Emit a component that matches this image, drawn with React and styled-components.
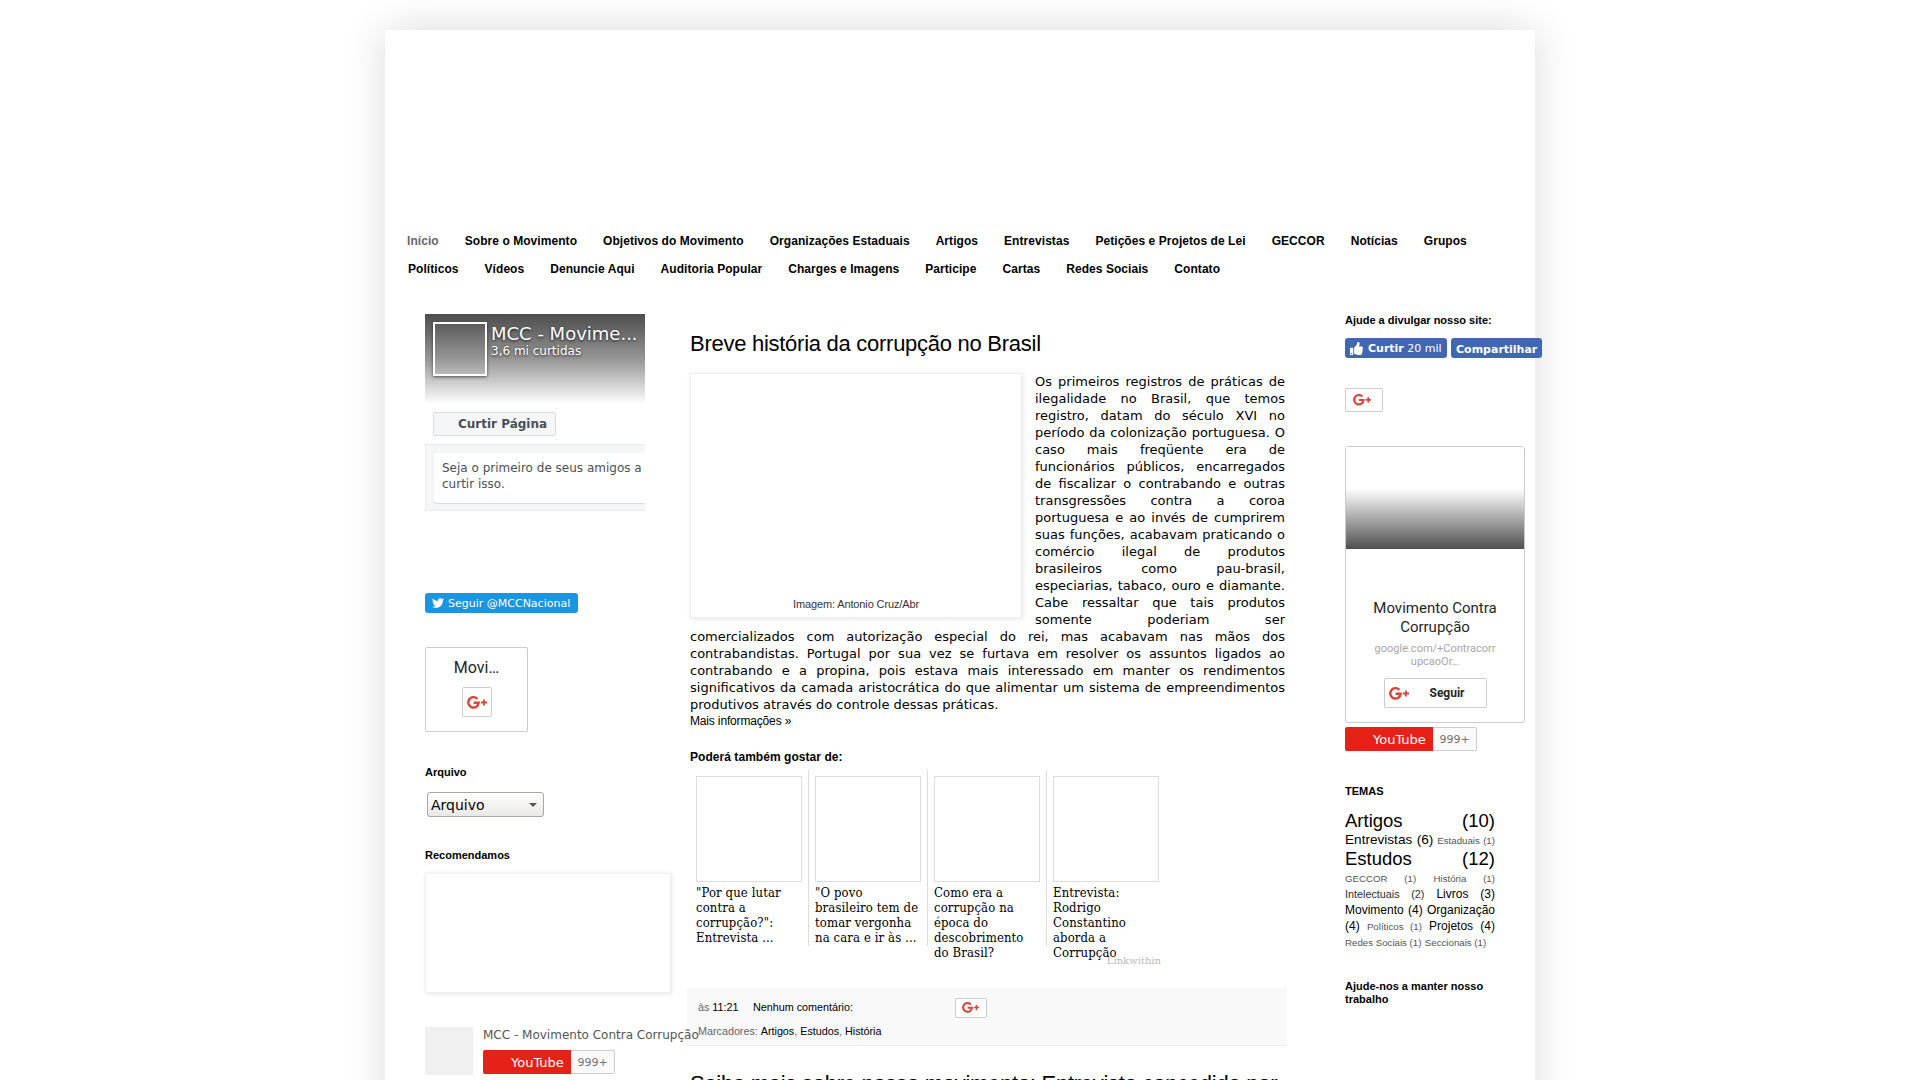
import React from "react";
import styled, { createGlobalStyle } from "styled-components";
import { FaTwitter, FaThumbsUp } from "react-icons/fa";

const ARIAL = '"Liberation Sans", Arial, sans-serif';
const DEJAVU = '"DejaVu Sans", Verdana, sans-serif';
const SERIF = '"DejaVu Serif Condensed", "DejaVu Serif", serif';
const ROBOTO = 'Roboto, sans-serif';

const Global = createGlobalStyle`
  * { box-sizing: border-box; }
  html, body { margin: 0; padding: 0; background: #fff; }
  body { height: 1080px; overflow: hidden; font: 12px ${ARIAL}; color: #000; }
  #root { height: 1080px; overflow: hidden; }
`;

const Page = styled.div`
  width: 1150px;
  height: 1200px;
  margin: 30px auto 0;
  padding-top: 197px;
  background: #fff;
  box-shadow: 0 0 40px rgba(0, 0, 0, 0.15);
`;
const Viewport = styled.div`
  display: flow-root;
  height: 1080px;
  overflow: hidden;
`;
const Nav = styled.nav`
  padding-left: 10px;
  display: flex;
  flex-direction: column;
`;
const NavRow = styled.div`
  display: flex;
  height: 28px;
  padding-left: ${(p) => p.$indent || 0}px;
`;
const NavLink = styled.a`
  padding: 0 13px 0 12px;
  margin-right: 1px;
  font: bold 12px/28px ${ARIAL};
  letter-spacing: 0.058px;
  color: ${(p) => (p.$active ? "#666" : "#000")};
  white-space: nowrap;
`;
const Columns = styled.div`
  display: flex;
  align-items: flex-start;
`;
const Left = styled.aside`
  position: relative;
  z-index: 1;
  width: 220px;
  margin-left: 40px;
  padding-top: 31px;
  display: flex;
  flex-direction: column;
  align-items: flex-start;
`;
const Center = styled.main`
  width: 600px;
  margin-left: 42px;
  padding-top: 47px;
`;
const Right = styled.aside`
  width: 150px;
  margin-left: 58px;
  padding-top: 30px;
  display: flex;
  flex-direction: column;
  align-items: flex-start;
`;
const Heading = styled.h2`
  margin: ${(p) => p.$top || 0}px 0 0;
  font: bold 11px ${ARIAL};
  line-height: ${(p) => p.$lh || 14}px;
`;

/* Facebook page box */
const FbBox = styled.div`
  width: 220px;
  height: 197px;
  overflow: hidden;
  font-family: ${DEJAVU};
`;
const FbCover = styled.div`
  display: flex;
  height: 90px;
  padding: 8px;
  background: linear-gradient(#4d4d4d, #969696 50%, #fff);
`;
const FbAvatar = styled.div`
  flex: none;
  width: 54px;
  height: 54px;
  border: 2px solid #fff;
  box-shadow: 0 1px 3px rgba(0, 0, 0, 0.6);
`;
const FbName = styled.div`
  margin-left: 4px;
  padding-top: 1px;
  color: #fff;
  white-space: nowrap;
  text-shadow: 0 1px 3px rgba(0, 0, 0, 0.8);
`;
const FbTitle = styled.div`
  font-size: 18px;
  line-height: 22px;
`;
const FbLikes = styled.div`
  font-size: 12px;
  line-height: 12px;
`;
const FbButton = styled.div`
  width: 123px;
  height: 24px;
  margin: 8px 0 8px 8px;
  padding-left: 24px;
  border: 1px solid #dadce0;
  border-radius: 2px;
  background: #f5f6f7;
  color: #4b4f56;
  font-weight: bold;
  font-size: 12px;
  line-height: 22px;
`;
const FbFriends = styled.div`
  height: 67px;
  padding: 8px 0 8px 8px;
  border: 1px solid #e9ebee;
  border-right: 0;
  background: #f5f6f7;
`;
const FbNote = styled.div`
  height: 50px;
  width: 230px;
  padding: 7px 8px;
  border-radius: 3px;
  background: #fff;
  box-shadow: 0 1px 1px rgba(0, 0, 0, 0.12);
  color: #4b4f56;
  font-size: 12px;
  line-height: 16px;
  white-space: nowrap;
`;

const TwitterButton = styled.a`
  display: flex;
  align-items: center;
  gap: 4px;
  width: 153px;
  height: 20px;
  margin-top: 82px;
  padding-left: 7px;
  border-radius: 3px;
  background: #1b95e0;
  color: #fff;
  font: 11px/20px ${DEJAVU};
  white-space: nowrap;
  span { padding-top: 1px; }
`;
const MiniCard = styled.div`
  display: flex;
  flex-direction: column;
  align-items: center;
  width: 103px;
  height: 85px;
  margin-top: 34px;
  padding-top: 9px;
  border: 1px solid #ccc;
  border-radius: 2px;
  font: 16px/22px ${ROBOTO};
  color: #262626;
`;
const PlusBox = styled.div`
  display: flex;
  align-items: center;
  padding-left: ${(p) => p.$pad}px;
  width: ${(p) => p.$w}px;
  height: ${(p) => p.$h}px;
  margin-top: ${(p) => p.$top || 0}px;
  border: 1px solid #ccc;
  border-radius: 2px;
  background: #fff;
`;
const Select = styled.div`
  display: flex;
  align-items: center;
  justify-content: space-between;
  width: 117px;
  height: 25px;
  margin: 13px 0 0 2px;
  padding: 0 6px 0 3px;
  border: 1px solid #aaa6a2;
  border-radius: 3px;
  background: linear-gradient(#fff, #eae8e7);
  font: 14px/22px ${DEJAVU};
`;
const Arrow = styled.i`
  border: 4px solid transparent;
  border-top: 4px solid #555;
  border-bottom: 0;
`;
const PictureFrame = styled.div`
  width: 246px;
  height: 120px;
  margin-top: 11px;
  border: 1px solid #eee;
  box-shadow: 1px 1px 5px rgba(0, 0, 0, 0.1);
`;
const Channel = styled.div`
  display: flex;
  gap: 10px;
  margin-top: 34px;
`;
const ChannelLogo = styled.div`
  width: 48px;
  height: 48px;
  background: #f0f0f0;
`;
const ChannelName = styled.div`
  height: 23px;
  font: 12px/16px ${DEJAVU};
  color: #555;
  white-space: nowrap;
`;
const YouTube = styled.div`
  display: flex;
  width: 132px;
  height: 24px;
  font-family: ${DEJAVU};
`;
const YouTubeLabel = styled.span`
  width: 88px;
  padding-left: 28px;
  border-radius: 2px 0 0 2px;
  background: #e62117;
  color: #fff;
  font-size: 13px;
  line-height: 25px;
`;
const YouTubeCount = styled.span`
  width: 44px;
  border: 1px solid #ccc;
  border-left: 0;
  border-radius: 0 2px 2px 0;
  background: #fafafa;
  color: #737373;
  font-size: 11px;
  line-height: 24px;
  text-align: center;
`;

/* Post */
const PostTitle = styled.h3`
  margin: ${(p) => p.$top || 0}px 0 0 3px;
  font: 22px/28px ${ARIAL};
  letter-spacing: -0.27px;
  white-space: nowrap;
`;
const PostBody = styled.div`
  width: 595px;
  margin: 15px 0 0 3px;
  font: 13px/17px ${DEJAVU};
  text-align: justify;
`;
const Figure = styled.div`
  float: left;
  display: flex;
  align-items: flex-end;
  justify-content: center;
  width: 332px;
  height: 245px;
  margin-right: 13px;
  padding-bottom: 5px;
  border: 1px solid #eee;
  box-shadow: 1px 1px 5px rgba(0, 0, 0, 0.1);
  font: 11px/16px ${ARIAL};
  letter-spacing: -0.13px;
  color: #333;
`;
const More = styled.div`
  margin-left: 3px;
  font: 12px/16px ${ARIAL};
  letter-spacing: -0.16px;
`;
const Related = styled.div`
  font: bold 12px/16px ${ARIAL};
  letter-spacing: 0.05px;
  margin: 20px 0 0 3px;
`;
const Thumbs = styled.div`
  display: flex;
  height: 176px;
  margin: 5px 0 0 3px;
`;
const Thumb = styled.div`
  width: ${(p) => (p.$first ? 118 : 119)}px;
  height: 176px;
  padding: 6px 6px 0 6px;
  border-left: ${(p) => (p.$first ? 0 : 1)}px solid #ddd;
  font: 13px/15px ${SERIF};
  letter-spacing: 0.11px;
`;
const ThumbPicture = styled.div`
  width: 106px;
  height: 106px;
  margin-bottom: 3px;
  border: 1px solid #ddd;
`;
const LinkWithin = styled.div`
  width: 474px;
  height: 42px;
  padding-top: 8px;
  font: 10px/14px "DejaVu Serif", serif;
  color: #bbb;
  text-align: right;
`;
const PostFooter = styled.div`
  height: 58px;
  padding: 7px 11px 0;
  border-bottom: 1px solid #eee;
  background: #f9f9f9;
  color: #666;
  font: 10.8px/24px ${ARIAL};
  letter-spacing: -0.02px;
  white-space: nowrap;
  b { font-weight: normal; color: #000; }
`;
const FooterRow = styled.div`
  display: flex;
  align-items: center;
  height: 24px;
  white-space: pre;
`;
const FooterItem = styled.span`
  width: ${(p) => p.$w}px;
`;

/* Right column */
const Buttons = styled.div`
  display: flex;
  gap: 4px;
  width: 197px;
  margin: 11px 0 30px;
`;
const FbPill = styled.a`
  display: flex;
  align-items: center;
  gap: 5px;
  width: ${(p) => p.$w}px;
  height: 20px;
  padding: ${(p) => p.$pt || 0}px 0 0 5px;
  border-radius: 3px;
  background: #4267b2;
  color: #fff;
  font: 11px ${DEJAVU};
  white-space: nowrap;
`;
const Card = styled.div`
  display: flex;
  flex-direction: column;
  align-items: center;
  width: 180px;
  height: 277px;
  margin: 34px 0 4px;
  border: 1px solid #ccc;
  border-radius: 3px;
  font-family: ${ROBOTO};
  text-align: center;
`;
const CardCover = styled.div`
  width: 178px;
  height: 102px;
  margin-bottom: 50px;
  background: linear-gradient(#fff 41%, #4f4f4f);
`;
const CardName = styled.div`
  font-size: 15px;
  line-height: 19px;
  color: #262626;
`;
const CardUrl = styled.div`
  margin: 5px 0 10px;
  font-size: 11px;
  line-height: 13px;
  color: #a8a8a8;
`;
const Follow = styled.div`
  display: flex;
  align-items: center;
  width: 103px;
  height: 30px;
  padding-left: 4px;
  border: 1px solid #ccc;
  border-radius: 2px;
  font-size: 12px;
  font-weight: bold;
  color: #262626;
  gap: 21px;
`;
const Labels = styled.div`
  width: 150px;
  margin-top: 12px;
  text-align: justify;
  font: 12px/16px ${ARIAL};
`;
const Label = styled.span`
  font-size: ${(p) => p.$s}px;
  line-height: ${(p) => p.$lh || "1"};
  color: ${(p) => (p.$s < 10 ? "#555" : p.$s < 11 ? "#2e2e2e" : "#000")};
`;

const GPlus = ({ w }) => (
  <svg width={w} height={w * 0.65} viewBox="0 0 20 13" fill="none" stroke="#db4437">
    <path d="M10.4 2.9A5.2 5.2 0 1 0 11.7 6.7H6.6" strokeWidth="2.4" />
    <path d="M17 3.4v6.2M13.9 6.5H20" strokeWidth="1.8" />
  </svg>
);

const YouTubeBadge = () => (
  <YouTube>
    <YouTubeLabel>YouTube</YouTubeLabel>
    <YouTubeCount>999+</YouTubeCount>
  </YouTube>
);

const row1 = ["Início", "Sobre o Movimento", "Objetivos do Movimento", "Organizações Estaduais", "Artigos", "Entrevistas", "Petições e Projetos de Lei", "GECCOR", "Notícias", "Grupos"];
const row2 = ["Políticos", "Vídeos", "Denuncie Aqui", "Auditoria Popular", "Charges e Imagens", "Participe", "Cartas", "Redes Sociais", "Contato"];
const related = [
  '"Por que lutar contra a corrupção?": Entrevista ...',
  '"O povo brasileiro tem de tomar vergonha na cara e ir às ...',
  "Como era a corrupção na época do descobrimento do Brasil?",
  "Entrevista: Rodrigo Constantino aborda a Corrupção",
];
const labels = [
  ["Artigos (10)", 18.5, "22px"], ["Entrevistas (6)", 13.6], ["Estaduais (1)", 9.7],
  ["Estudos (12)", 18.5, "22px"], ["GECCOR (1)", 9.7], ["História (1)", 9.7],
  ["Intelectuais (2)", 10.8], ["Livros (3)", 12], ["Movimento (4)", 12],
  ["Organização (4)", 12], ["Políticos (1)", 9.7], ["Projetos (4)", 12],
  ["Redes Sociais (1)", 9.7], ["Seccionais (1)", 9.7],
];

export default function App() {
  return (
    <Viewport>
      <Global />
      <Page>
        <Nav>
          <NavRow>
            {row1.map((t, i) => <NavLink key={t} $active={i === 0}>{t}</NavLink>)}
          </NavRow>
          <NavRow $indent={1}>
            {row2.map((t) => <NavLink key={t}>{t}</NavLink>)}
          </NavRow>
        </Nav>
        <Columns>
          <Left>
            <FbBox>
              <FbCover>
                <FbAvatar />
                <FbName>
                  <FbTitle>MCC - Movime...</FbTitle>
                  <FbLikes>3,6 mi curtidas</FbLikes>
                </FbName>
              </FbCover>
              <FbButton>Curtir Página</FbButton>
              <FbFriends>
                <FbNote>Seja o primeiro de seus amigos a<br />curtir isso.</FbNote>
              </FbFriends>
            </FbBox>
            <TwitterButton><FaTwitter size={12} /><span>Seguir @MCCNacional</span></TwitterButton>
            <MiniCard>
              Movi…
              <PlusBox $w={30} $h={30} $top={8} $pad={4}><GPlus w={20} /></PlusBox>
            </MiniCard>
            <Heading $top={33}>Arquivo</Heading>
            <Select>Arquivo<Arrow /></Select>
            <Heading $top={31}>Recomendamos</Heading>
            <PictureFrame />
            <Channel>
              <ChannelLogo />
              <div>
                <ChannelName>MCC - Movimento Contra Corrupção</ChannelName>
                <YouTubeBadge />
              </div>
            </Channel>
          </Left>
          <Center>
            <PostTitle>Breve história da corrupção no Brasil</PostTitle>
            <PostBody>
              <Figure>Imagem: Antonio Cruz/Abr</Figure>
              Os primeiros registros de práticas de ilegalidade no Brasil, que temos registro, datam do século XVI no período da colonização portuguesa. O caso mais freqüente era de funcionários públicos, encarregados de fiscalizar o contrabando e outras transgressões contra a coroa portuguesa e ao invés de cumprirem suas funções, acabavam praticando o comércio ilegal de produtos brasileiros como pau-brasil, especiarias, tabaco, ouro e diamante. Cabe ressaltar que tais produtos somente poderiam ser comercializados com autorização especial do rei, mas acabavam nas mãos dos contrabandistas. Portugal por sua vez se furtava em resolver os assuntos ligados ao contrabando e a propina, pois estava mais interessado em manter os rendimentos significativos da camada aristocrática do que alimentar um sistema de empreendimentos produtivos através do controle dessas práticas.
            </PostBody>
            <More>Mais informações »</More>
            <Related>Poderá também gostar de:</Related>
            <Thumbs>
              {related.map((t, i) => (
                <Thumb key={t} $first={i === 0}><ThumbPicture />{t}</Thumb>
              ))}
            </Thumbs>
            <LinkWithin>Linkwithin</LinkWithin>
            <PostFooter>
              <FooterRow>
                <FooterItem $w={55}>às <b>11:21</b></FooterItem>
                <FooterItem $w={202}><b>Nenhum comentário:</b></FooterItem>
                <PlusBox $w={32} $h={20} $top={2} $pad={6}><GPlus w={17} /></PlusBox>
              </FooterRow>
              <FooterRow>Marcadores: <b>Artigos</b>, <b>Estudos</b>, <b>História</b></FooterRow>
            </PostFooter>
            <PostTitle $top={24}>Saiba mais sobre nosso movimento: Entrevista concedida por</PostTitle>
          </Center>
          <Right>
            <Heading>Ajude a divulgar nosso site:</Heading>
            <Buttons>
              <FbPill $w={102}><FaThumbsUp size={13} /><span><b>Curtir</b> 20 mil</span></FbPill>
              <FbPill $w={91} $pt={2}><b>Compartilhar</b></FbPill>
            </Buttons>
            <PlusBox $w={38} $h={24} $pad={7}><GPlus w={18} /></PlusBox>
            <Card>
              <CardCover />
              <CardName>Movimento Contra<br />Corrupção</CardName>
              <CardUrl>google.com/+Contracorr<br />upcaoOr…</CardUrl>
              <Follow><GPlus w={20} />Seguir</Follow>
            </Card>
            <YouTubeBadge />
            <Heading $top={33}>TEMAS</Heading>
            <Labels>
              {labels.map(([t, s, lh]) => (
                <React.Fragment key={t}><Label $s={s} $lh={lh}>{t}</Label>{" "}</React.Fragment>
              ))}
            </Labels>
            <Heading $top={30} $lh={13}>Ajude-nos a manter nosso trabalho</Heading>
          </Right>
        </Columns>
      </Page>
    </Viewport>
  );
}
